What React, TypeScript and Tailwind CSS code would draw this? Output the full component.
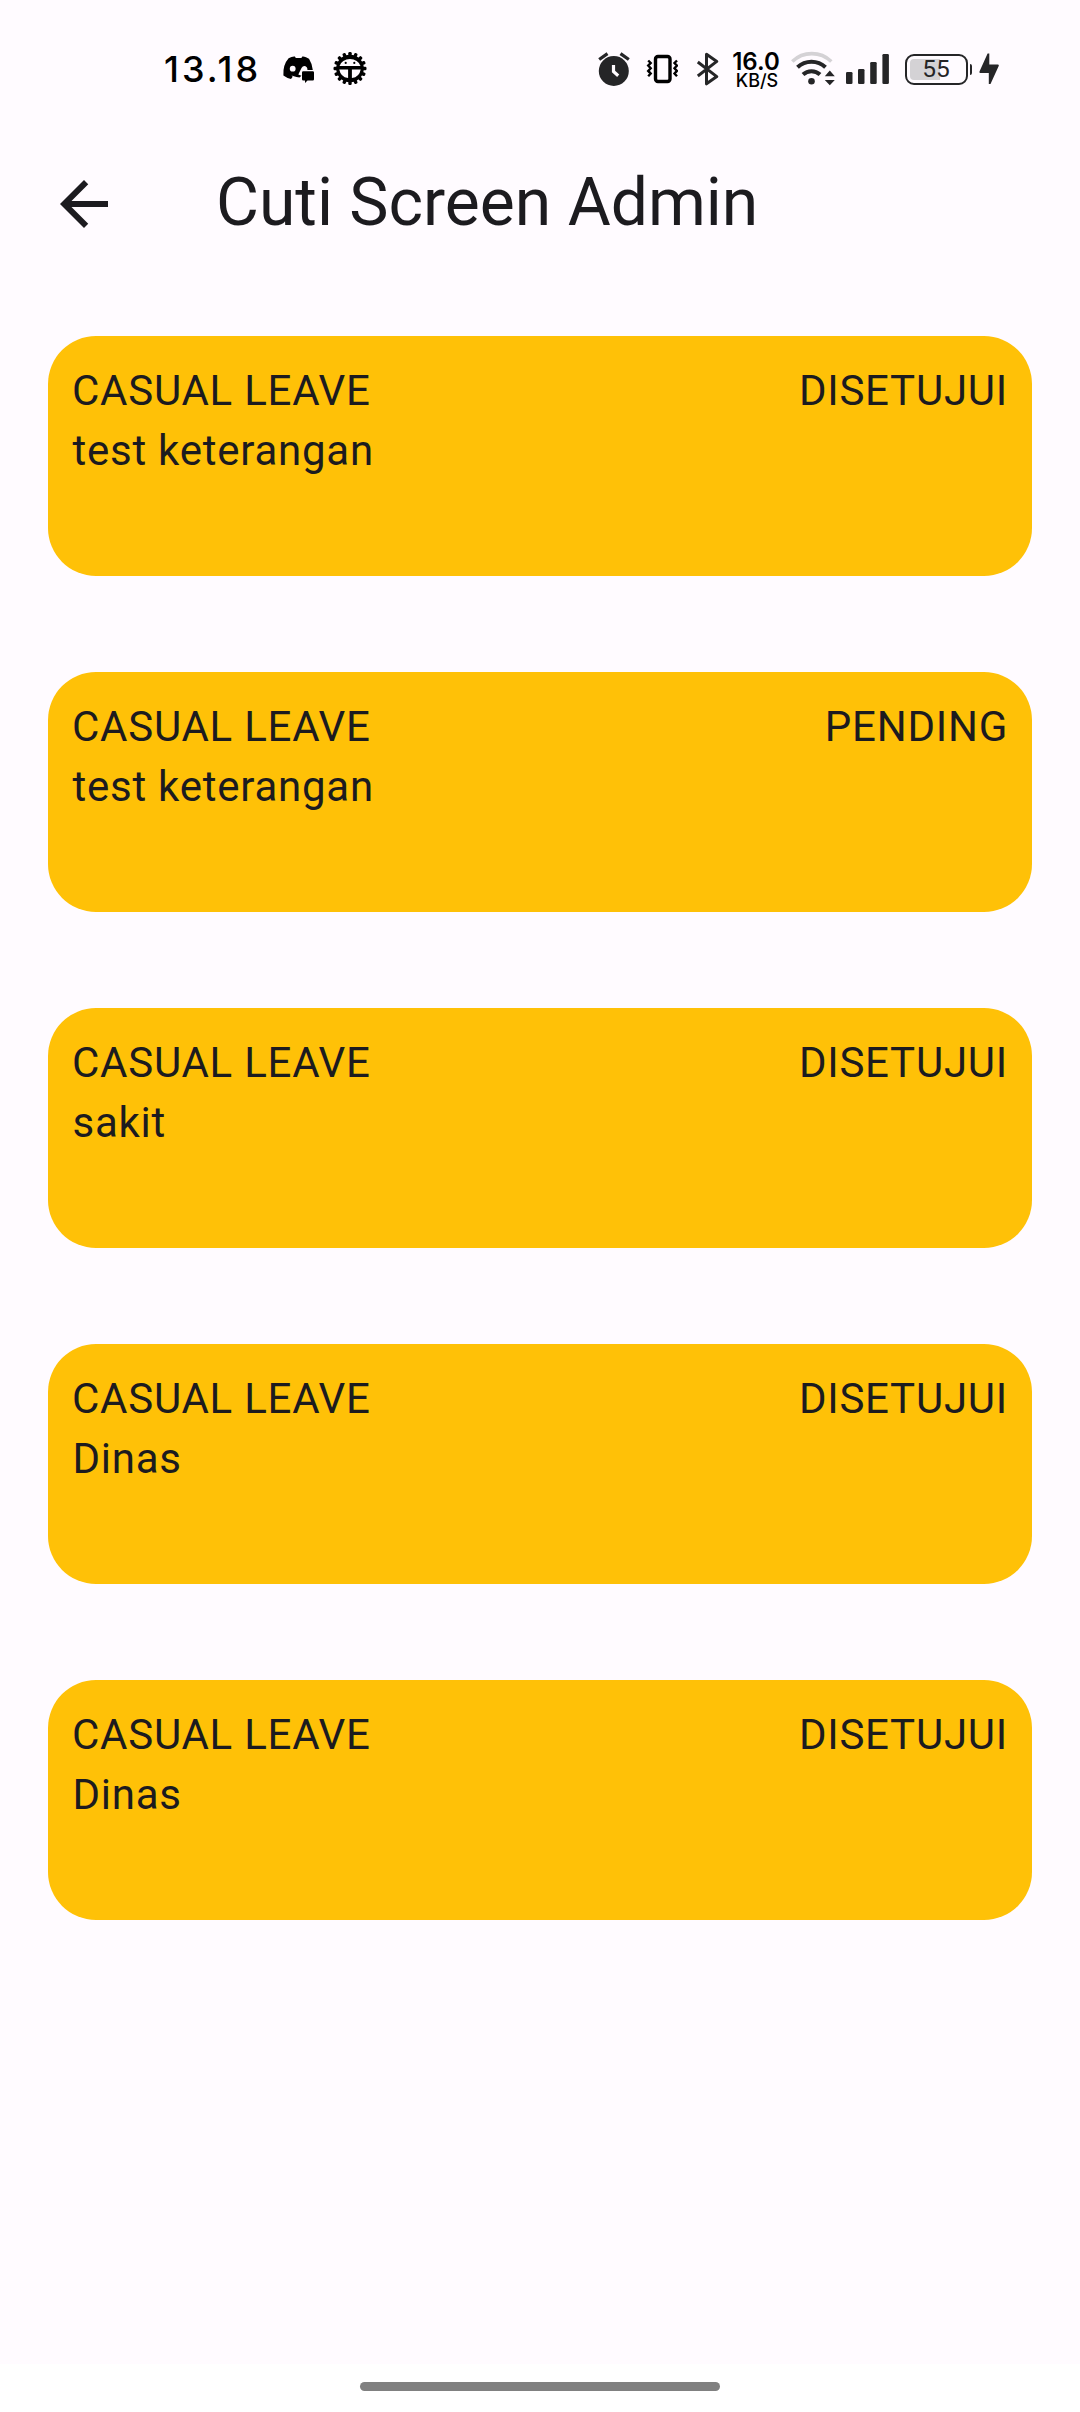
const leaves = [
  { type: "CASUAL LEAVE", note: "test keterangan", status: "DISETUJUI" },
  { type: "CASUAL LEAVE", note: "test keterangan", status: "PENDING" },
  { type: "CASUAL LEAVE", note: "sakit", status: "DISETUJUI" },
  { type: "CASUAL LEAVE", note: "Dinas", status: "DISETUJUI" },
  { type: "CASUAL LEAVE", note: "Dinas", status: "DISETUJUI" },
];

function DiscordIcon() {
  return (
    <svg className="ml-[21px] h-9 w-9 shrink-0" viewBox="281 52 36 36">
      <path
        d="M291.500 58q2.200-.9 3.400-.5l.9 1.500h5.600l.9-1.500q1.500-.3 3.700.7l3 1.500q3.200 5 3.800 11.300H302v5.300l-2.500 2.200-3-.6q-2.700-.3-5-1.300l1.200 1.200-1.700 2.300q-3.700-.8-7.600-3.600-.7-10.500 5.200-17.200z"
        fill="#000"
      />
      <circle cx="292.700" cy="69.700" r="2.900" fill="#fffbff" />
      <path d="M298.300 75.500l3.200-6.500q1.500-2.600 4-1.800 1.600.8 1.900 2.600v1.200h-5.400v6z" fill="#fffbff" />
      <path d="M303.200 72.300h9.600q1.200 0 1.200 1.200v6.800q0 1.200-1.200 1.200h-5.300l-2.500 2.500v-2.500h-1.800q-1.200 0-1.200-1.200v-6.800q0-1.200 1.200-1.200z" fill="#000" />
    </svg>
  );
}

const teeth = Array.from({ length: 16 }, (_, i) => i * 22.5);

function DebugIcon() {
  return (
    <svg className="ml-[15px] h-9 w-9 shrink-0" viewBox="-18 -17.500 36 36">
      {teeth.map((a) => (
        <rect key={a} x="-1.700" y="-16.500" width="3.400" height="5" rx="1.200" transform={`rotate(${a})`} />
      ))}
      <circle r="13.800" />
      <path d="M-10.500 -2.500a10.800 9 0 0 1 21 0z" fill="#fffbff" />
      <circle cx="-4.300" cy="-5.600" r="1.100" />
      <circle cx="4.300" cy="-5.600" r="1.100" />
      <path d="M-10.700 .9H-1.900V9.500A10.500 10.500 0 0 1 -10.700 .9zM10.700 .9H1.900V9.500A10.500 10.500 0 0 0 10.700 .9z" fill="#fffbff" />
    </svg>
  );
}

function AlarmIcon() {
  return (
    <svg className="h-9 w-8 shrink-0" viewBox="598 51 32 36">
      <circle cx="613.800" cy="71" r="15" fill="#252527" />
      <path d="M599.200 59.500l8.300-5.800M628.800 59.500l-8.300-5.800" stroke="#252527" strokeWidth="3.300" />
      <path d="M613.500 65v6.500l4.700 4.200" stroke="#fffbff" strokeWidth="3.200" fill="none" />
    </svg>
  );
}

function VibrateIcon() {
  return (
    <svg className="ml-4 h-9 w-8 shrink-0" viewBox="646 51 32 36" fill="none" stroke="#000">
      <rect x="655.500" y="56.500" width="14.500" height="25" rx="2.500" strokeWidth="3.400" />
      <path d="M648.200 60.500l2.500 2.500-2.500 2.600 2.500 2.700-2.500 2.600 2.500 2.700-2.500 2.700M677 60.500l-2.500 2.500 2.500 2.600-2.500 2.700 2.500 2.600-2.500 2.700 2.500 2.700" strokeWidth="2.400" />
    </svg>
  );
}

function BluetoothIcon() {
  return (
    <svg className="ml-[18px] h-9 w-6 shrink-0" viewBox="696 51 24 36" fill="none" stroke="#252527" strokeWidth="3">
      <path d="M697.800 62l19 14.600-10.300 7.200V54.200l10.300 7.200-19 14.600" strokeLinejoin="round" />
    </svg>
  );
}

function WifiIcon() {
  return (
    <svg className="ml-3 h-9 w-[46px] shrink-0" viewBox="790 51 46 36" fill="none">
      <path d="M792.300 61.500a28 28 0 0 1 39 0" stroke="#d4d2d5" strokeWidth="3.600" />
      <path d="M797.500 67.200a20.500 20.500 0 0 1 28 0" stroke="#252527" strokeWidth="4" />
      <path d="M803 74.500a12.500 12.500 0 0 1 17 0" stroke="#252527" strokeWidth="4" />
      <circle cx="811.500" cy="81.300" r="3.300" fill="#252527" />
      <path d="M829.800 70.500l5 5.700h-10zM829.800 85.200l5-5.200h-10z" fill="#252527" />
    </svg>
  );
}

function SignalIcon() {
  return (
    <svg className="ml-[9px] h-9 w-11 shrink-0" viewBox="845 51 44 36" fill="#252527">
      <rect x="846" y="72" width="6.500" height="12" rx="1.300" />
      <rect x="858" y="69" width="6.500" height="15" rx="1.300" />
      <rect x="870.200" y="62" width="6.500" height="22" rx="1.300" />
      <rect x="882.400" y="54" width="6.500" height="30" rx="1.300" />
    </svg>
  );
}

function Battery() {
  return (
    <div className="ml-4 flex h-9 items-center">
      <div className="relative flex h-[31px] w-[63px] items-center justify-center rounded-[9px] border-[2.500px] border-[#252527]">
        <div className="absolute left-[3px] top-[3px] h-[21px] w-[30px] rounded-l-[4px] bg-[#d4d2d5]" />
        <span className="relative pr-px font-[Roboto] text-[24.500px] leading-none text-[#252527]">55</span>
      </div>
      <div className="ml-[2px] h-[11px] w-[2px] rounded-r bg-[#252527]" />
      <svg className="ml-[6px] h-9 w-[22px]" viewBox="978 51 22 36" fill="#252527">
        <path d="M989.300 53.500V64.500H998q1.300.1.700 1.400L990.500 84h-1.700V73h-8.600q-1.300-.1-.7-1.400L987.600 53.500z" />
      </svg>
    </div>
  );
}

function StatusBar() {
  return (
    <div className="flex h-[120px] items-start pl-[164px] pt-[51px] text-black">
      <div className="h-9 w-[96px] whitespace-nowrap font-[Inter] text-[36px] font-[450] leading-9 tracking-[3px]">13.18</div>
      <DiscordIcon />
      <DebugIcon />
      <div className="ml-[230px] flex">
        <AlarmIcon />
        <VibrateIcon />
        <BluetoothIcon />
        <div className="ml-[13px] mr-[-1px] flex h-9 w-[46px] flex-col items-center font-[Inter] font-semibold">
          <span className="text-[24px] leading-[22px]">16.0</span>
          <span className="ml-[2px] text-[18px] font-medium leading-[15px]">KB/S</span>
        </div>
        <WifiIcon />
        <SignalIcon />
        <Battery />
      </div>
    </div>
  );
}

export default function App() {
  return (
    <div className="flex h-[2412px] w-[1080px] flex-col overflow-hidden bg-[#fffbff] font-[Roboto,sans-serif] text-[#1c1b1f]">
      <StatusBar />
      <header className="flex h-[168px] items-center pl-12">
        <svg className="h-[72px] w-[72px]" viewBox="0 0 24 24" fill="currentColor">
          <path d="M20 11H7.830l5.590-5.590L12 4l-8 8 8 8 1.410-1.410L7.830 13H20z" />
        </svg>
        <h1 className="mb-[2px] ml-24 text-[66px] leading-[84px]">Cuti Screen Admin</h1>
      </header>
      <main className="flex flex-1 flex-col gap-24 px-12 pt-12">
        {leaves.map((leave, i) => (
          <article key={i} className="h-60 rounded-[48px] bg-[#ffc107] px-6 pt-[25px] text-[42px] leading-[60px] tracking-[0.750px]">
            <div className="flex justify-between">
              <span>{leave.type}</span>
              <span>{leave.status}</span>
            </div>
            <p className="pl-[0.500px]">{leave.note}</p>
          </article>
        ))}
      </main>
      <footer className="flex h-12 justify-center bg-white pt-[18px]">
        <div className="h-[9px] w-[360px] rounded-full bg-[#808080]" />
      </footer>
    </div>
  );
}
